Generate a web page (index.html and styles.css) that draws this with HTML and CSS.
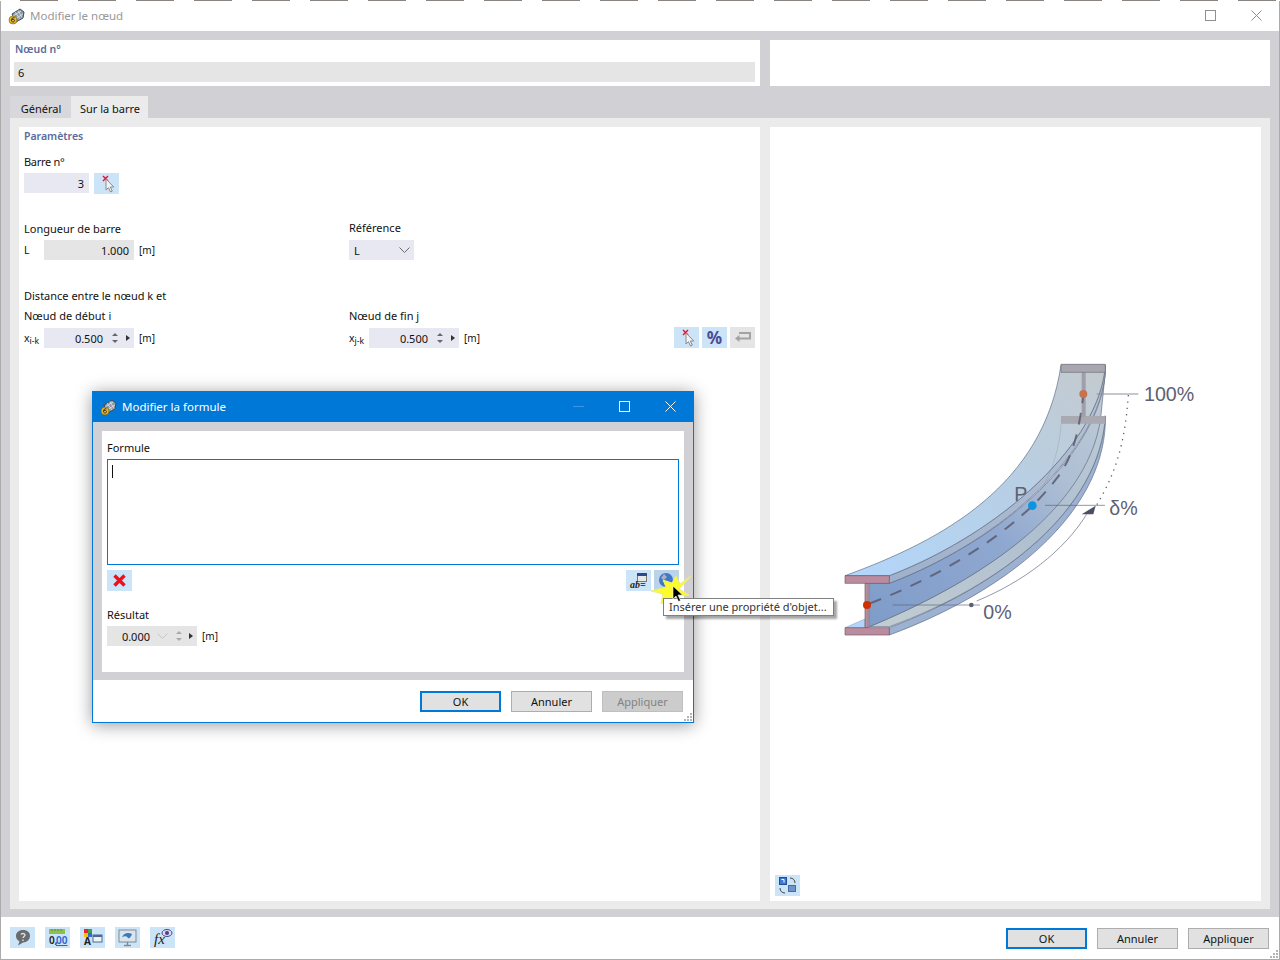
FILE: index.html
```html
<!DOCTYPE html>
<html lang="fr">
<head>
    <meta charset="UTF-8">
    <title>Modifier le nœud</title>
    <link rel="stylesheet" href="styles.css">
</head>
<body>
<svg class="defs" width="0" height="0">
    <symbol id="pick" viewBox="0 0 25 21">
        <path d="M9 3l5 5M14 3L9 8" stroke="#e8112d" stroke-width="1.400" fill="none"/>
        <path d="M12 6v11l2.500-2.300 2 4.300 1.800-.9-2-4.100h3.500z" fill="#f4f4f4" stroke="#8a8a8a"/>
    </symbol>
    <symbol id="logo" viewBox="0 0 18 18">
        <path d="M4 7l8-5 4 3-1 6-7 4z" fill="#8d9aa8" stroke="#3d4a5a"/>
        <path d="M7 5l5 7M10 3.500l4 7M5 9l8-5M7 12l8-5" stroke="#dfe5ea" fill="none" stroke-width=".8"/>
        <circle cx="5" cy="13" r="4" fill="#e5b82a" stroke="#6b5a10" stroke-width=".6"/>
        <path d="M6.500 10.800c-2-.6-3 1-3 2.400s.7 1.800 1.500 1.800 1.500-.6 1.500-1.400-.7-1.300-1.500-1.300-1.300.4-1.500.8" stroke="#333" fill="none"/>
    </symbol>
    <symbol id="grip" viewBox="0 0 10 10">
        <path d="M7 1h2v2H7zM4 4h2v2H4zM7 4h2v2H7zM1 7h2v2H1zM4 7h2v2H4zM7 7h2v2H7z" fill="#b4b4b4"/>
    </symbol>
</svg>

<div class="back-strip"></div>
<div class="window">
    <div class="titlebar">
        <svg class="title-logo" width="18" height="18"><use href="#logo"/></svg>
        <span class="title-text">Modifier le nœud</span>
        <svg class="win-ctl win-max" width="11" height="11"><rect x=".5" y=".5" width="10" height="10" fill="none" stroke="#8f8f8f"/></svg>
        <svg class="win-ctl win-close" width="11" height="11"><path d="M.5.500l10 10M10.500.500l-10 10" stroke="#8f8f8f"/></svg>
    </div>

    <div class="body">
        <div class="top-row">
            <div class="top-panel">
                <div class="group-title">Nœud n°</div>
                <div class="node-field">6</div>
            </div>
            <div class="top-panel top-panel-right"></div>
        </div>

        <div class="tabs">
            <div class="tab">Général</div>
            <div class="tab tab-active">Sur la barre</div>
        </div>

        <div class="tab-page">
            <div class="form-panel">
                <div class="group-title group-title-form">Paramètres</div>
                <div class="label label-bar">Barre n°</div>
                <div class="row row-bar">
                    <div class="field field-bar">3</div>
                    <button class="icon-btn"><svg width="25" height="21"><use href="#pick"/></svg></button>
                </div>

                <div class="row row-length">
                    <div class="col">
                        <div class="label">Longueur de barre</div>
                        <div class="row field-row">
                            <span class="sym">L</span>
                            <div class="field field-grey">1.000</div>
                            <span class="unit">[m]</span>
                        </div>
                    </div>
                    <div class="col">
                        <div class="label label-ref">Référence</div>
                        <div class="select">
                            <span>L</span>
                            <svg width="11" height="6"><path d="M.5.500l5 5 5-5" fill="none" stroke="#6a6a6a"/></svg>
                        </div>
                    </div>
                </div>

                <div class="label label-dist">Distance entre le nœud k et</div>
                <div class="row row-pos">
                    <div class="col">
                        <div class="label">Nœud de début i</div>
                    </div>
                    <div class="col">
                        <div class="label">Nœud de fin j</div>
                    </div>
                </div>
                <div class="row row-x">
                    <div class="col row field-row">
                        <span class="sym">x<sub>i-k</sub></span>
                        <div class="field field-spin">
                            <span class="spin-val">0.500</span>
                            <span class="spin"><i class="up"></i><i class="down"></i></span>
                            <i class="next"></i>
                        </div>
                        <span class="unit">[m]</span>
                    </div>
                    <div class="col row field-row">
                        <span class="sym">x<sub>j-k</sub></span>
                        <div class="field field-spin">
                            <span class="spin-val">0.500</span>
                            <span class="spin"><i class="up"></i><i class="down"></i></span>
                            <i class="next"></i>
                        </div>
                        <span class="unit">[m]</span>
                    </div>
                    <div class="tool-btns">
                        <button class="icon-btn"><svg width="25" height="21"><use href="#pick"/></svg></button>
                        <button class="icon-btn percent">%</button>
                        <button class="icon-btn icon-btn-off">
                            <svg width="25" height="21"><path d="M9 6h11v5.500H8" fill="none" stroke="#a3a3a3" stroke-width="2"/><path d="M9.500 8L5 11.500 9.500 15z" fill="#a3a3a3"/></svg>
                        </button>
                    </div>
                </div>
            </div>

            <div class="preview-panel">
                <svg class="beam" width="380" height="290" viewBox="0 0 1140 870">
                    <defs>
                        <linearGradient id="topFace" x1="0" y1="1" x2="1" y2="0">
                            <stop offset="0" stop-color="#b2d6fb"/>
                            <stop offset=".55" stop-color="#b8cfe4"/>
                            <stop offset="1" stop-color="#c4cace"/>
                        </linearGradient>
                        <linearGradient id="webFace" x1="0" y1="1" x2="1" y2="0">
                            <stop offset="0" stop-color="#7f9cc9"/>
                            <stop offset=".45" stop-color="#8fa8d0"/>
                            <stop offset=".7" stop-color="#aebfd4"/>
                            <stop offset="1" stop-color="#c0ccd4"/>
                        </linearGradient>
                        <linearGradient id="lowFace" x1="0" y1="1" x2="1" y2="0">
                            <stop offset="0" stop-color="#c2cdd2"/>
                            <stop offset=".6" stop-color="#aebfd0"/>
                            <stop offset="1" stop-color="#bccad6"/>
                        </linearGradient>
                        <linearGradient id="bandFace" x1="0" y1="1" x2="1" y2="0">
                            <stop offset="0" stop-color="#9fb0cc"/>
                            <stop offset="1" stop-color="#b4c2d6"/>
                        </linearGradient>
                    </defs>
                    <path d="M178 818V840C530 710 815 480 826 206V183C810 460 520 690 178 818Z" fill="#9db2d2" stroke="#5f6b80" stroke-width="2"/>
                    <path d="M118 815H178C520 690 810 460 826 183L800 190C770 480 420 690 118 815Z" fill="url(#lowFace)" stroke="#5f6b80" stroke-width="2"/>
                    <path d="M118 685H178C530 550 810 290 826 50L812 190C770 480 420 690 118 815Z" fill="url(#webFace)" stroke="#5f6b80" stroke-width="2"/>
                    <path d="M178 662C520 530 810 260 826 30V50C810 280 530 550 178 685Z" fill="url(#bandFace)" stroke="#5f6b80" stroke-width="2"/>
                    <path d="M45 662C340 555 640 390 693 30H826C810 260 520 530 178 662Z" fill="url(#topFace)" stroke="#5f6b80" stroke-width="2"/>
                    <path d="M693 206C690 270 670 340 640 392" fill="none" stroke="#8a94a0"/>
                    <path d="M693 183H826V206H693Z" fill="#a9a9b1"/>
                    <path d="M755 52H767V185H755Z" fill="#a09ea8"/>
                    <path d="M693 28H826V52H693Z" fill="#a8a6ae" stroke="#6b6b78" stroke-width="2"/>
                    <path d="M45 818L105 792V818Z" fill="#b2d6fb" stroke="#5f6b80"/>
                    <path d="M105 685H115V818H105Z" fill="#b98ca0" stroke="#6b5a68" stroke-width="2"/>
                    <path d="M45 662H178V685H45ZM45 818H178V840H45Z" fill="#bb8c9f" stroke="#6b5a68" stroke-width="2"/>
                    <path d="M120 745C330 665 560 530 680 370 720 320 745 250 760 120" fill="none" stroke="#5a5a6e" stroke-width="6" stroke-dasharray="36 30" stroke-opacity=".85"/>
                    <path d="M188 750H450" stroke="#5f6378" stroke-width="2" fill="none"/>
                    <circle cx="424" cy="750" r="7" fill="#5a5f78"/>
                    <path d="M645 451H825" stroke="#5f6378" stroke-width="2"/>
                    <path d="M800 117H925" stroke="#8d8d9a" stroke-width="3"/>
                    <path d="M440 738C580 680 700 590 770 478" fill="none" stroke="#5f6378" stroke-width="2"/>
                    <path d="M755 478L797 452 790 478Z" fill="#4b4f66"/>
                    <path d="M895 120C885 260 860 350 800 450" fill="none" stroke="#5f6378" stroke-width="4" stroke-dasharray="4 15"/>
                    <circle cx="111" cy="750" r="12" fill="#cf3000"/>
                    <circle cx="607" cy="452" r="13" fill="#0a94e2"/>
                    <circle cx="760" cy="117" r="12" fill="#c9704f"/>
                    <text class="beam-text" x="942" y="138">100%</text>
                    <text class="beam-text" x="553" y="438">P</text>
                    <text class="beam-text" x="838" y="481">δ%</text>
                    <text class="beam-text" x="460" y="792">0%</text>
                </svg>
                <button class="icon-btn view-btn">
                    <svg width="25" height="21">
                        <rect x="4.500" y="2.500" width="7" height="7" fill="#3f78d0" stroke="#1d4f9c"/>
                        <path d="M6.500 4.500h2.500v3" stroke="#fff" fill="none"/>
                        <rect x="13.500" y="10.500" width="7" height="6" fill="#6f94c7" stroke="#4a6a98"/>
                        <path d="M15 3c3 0 5 2 5 5M10 18c-3 0-5-2-5-5" stroke="#444" fill="none"/>
                    </svg>
                </button>
            </div>
        </div>
    </div>

    <div class="footer">
        <button class="icon-btn">
            <svg width="25" height="21">
                <path d="M13 3c4.500 0 7 2.500 7 6s-3 6.500-7 6.500l-5 3 1.500-4C7 13 6 11 6 9c0-3.500 3-6 7-6z" fill="#6b6b6b"/>
                <path d="M11 7.500c.5-1.500 4-1.500 4 .5 0 1.500-2 1.500-2 3M13 12.500v1.500" stroke="#cce4f7" stroke-width="1.400" fill="none"/>
            </svg>
        </button>
        <button class="icon-btn">
            <svg width="25" height="21">
                <rect x="4" y="2" width="16" height="5" fill="#8cc152"/>
                <path d="M7 2v2M10 2v2M13 2v2M16 2v2" stroke="#5b8f2c"/>
                <text class="icon-num" x="4" y="17">0,</text>
                <text class="icon-num icon-num-blue" x="11" y="17">00</text>
            </svg>
        </button>
        <button class="icon-btn">
            <svg width="25" height="21">
                <rect x="4" y="2" width="4" height="4" fill="#e8272a"/><rect x="8" y="2" width="4" height="4" fill="#43a047"/>
                <rect x="4" y="6" width="4" height="4" fill="#f4c20d"/><rect x="8" y="6" width="4" height="4" fill="#3367d6"/>
                <text class="icon-a" x="4" y="18">A</text>
                <rect x="13" y="8" width="9" height="7" fill="#f2f2f2" stroke="#4b6a90"/>
                <rect x="13" y="8" width="9" height="2" fill="#4b6a90"/>
            </svg>
        </button>
        <button class="icon-btn">
            <svg width="25" height="21">
                <rect x="4" y="3" width="17" height="12" fill="#d8e4ee" stroke="#808a94"/>
                <path d="M7 10c2-4 6-5 10-3-1 3-3 5-4 4-1-2-3-2-6-1z" fill="#3f78b8"/>
                <path d="M12.500 15v3M9 18.500h7" stroke="#808a94" stroke-width="1.400"/>
            </svg>
        </button>
        <button class="icon-btn">
            <svg width="25" height="21">
                <text class="icon-fx" x="4" y="17">fx</text>
                <ellipse cx="17" cy="6" rx="5" ry="3.500" fill="#d8d8ea" stroke="#4a4a8a"/>
                <circle cx="17" cy="6" r="2" fill="#4a3f8a"/>
            </svg>
        </button>
        <div class="footer-btns">
            <button class="btn btn-default">OK</button>
            <button class="btn">Annuler</button>
            <button class="btn">Appliquer</button>
        </div>
        <svg class="grip" width="10" height="10"><use href="#grip"/></svg>
    </div>

    <div class="dialog">
        <div class="dlg-title">
            <svg class="title-logo" width="18" height="18"><use href="#logo"/></svg>
            <span class="dlg-title-text">Modifier la formule</span>
            <svg class="dlg-ctl dlg-min" width="11" height="11"><path d="M0 5.500h11" stroke="#3f95e0"/></svg>
            <svg class="dlg-ctl dlg-max" width="11" height="11"><rect x=".5" y=".5" width="10" height="10" fill="none" stroke="#fff"/></svg>
            <svg class="dlg-ctl dlg-close" width="11" height="11"><path d="M.5.500l10 10M10.500.500l-10 10" stroke="#fff"/></svg>
        </div>
        <div class="dlg-body">
            <div class="dlg-panel">
                <div class="label">Formule</div>
                <div class="formula-box"><span class="caret"></span></div>
                <div class="row dlg-tools">
                    <button class="icon-btn">
                        <svg width="25" height="21"><path d="M7.500 5.500l10 10M17.500 5.500l-10 10" stroke="#f0101c" stroke-width="3.400"/></svg>
                    </button>
                    <div class="dlg-tools-right">
                        <button class="icon-btn">
                            <svg width="25" height="21">
                                <rect x="11.500" y="3.500" width="9" height="8" fill="#e8e8e8" stroke="#777"/>
                                <rect x="11" y="3" width="10" height="3" fill="#2c4a8a"/>
                                <text class="icon-ab" x="4" y="18">ab=</text>
                            </svg>
                        </button>
                        <button class="icon-btn icon-btn-dim">
                            <svg width="25" height="21">
                                <circle cx="12" cy="10" r="7" fill="#3f78c8"/>
                                <path d="M10 4l3 3-3 3-3-2z" fill="#a8b4c4"/>
                            </svg>
                        </button>
                    </div>
                </div>
                <div class="label label-result">Résultat</div>
                <div class="row field-row">
                    <div class="field field-result">
                        <span class="spin-val result-val">0.000</span>
                        <svg class="result-chev" width="11" height="6"><path d="M.5.500l5 5 5-5" fill="none" stroke="#c4c4c4"/></svg>
                        <span class="spin spin-off"><i class="up"></i><i class="down"></i></span>
                        <i class="next"></i>
                    </div>
                    <span class="unit">[m]</span>
                </div>
            </div>
        </div>
        <div class="dlg-footer">
            <button class="btn btn-default">OK</button>
            <button class="btn">Annuler</button>
            <button class="btn btn-off">Appliquer</button>
            <svg class="grip" width="10" height="10"><use href="#grip"/></svg>
        </div>
    </div>

    <svg class="burst" width="44" height="40" viewBox="0 0 44 40">
        <path d="M42 5L31 13 27 5 23 12 14 9 17 16 2 20 14 23 12 33 21 27 27 32 29 25 40 24 30 18z" fill="#fbfb2e" stroke="#eded7c"/>
    </svg>
    <div class="tooltip">Insérer une propriété d'objet...</div>
    <svg class="cursor" width="12" height="18" viewBox="0 0 12 18">
        <path d="M1 1v13l3-3 2.500 5.500 2-1L6 10h4.500z" fill="#000" stroke="#fff" stroke-width=".6"/>
    </svg>
</div>
</body>
</html>
```

FILE: styles.css
```css
body {
    margin: 0;
    width: 1280px;
    height: 960px;
    overflow: hidden;
    background-color: #ffffff;
    color: #111111;
    font-family: 'Noto Sans', sans-serif;
    font-size: 11px;
}
button {
    font-family: inherit;
    font-size: inherit;
    padding: 0;
}
.defs {
    display: block;
    height: 0;
}
.back-strip {
    height: 1px;
    background: repeating-linear-gradient(90deg, #fff 0, #fff 20px, #8a8580 20px, #8a8580 58px);
}
.window {
    position: relative;
    display: flex;
    flex-direction: column;
    height: 958px;
    border: solid #ababab;
    border-width: 0 1px 1px 1px;
}
.titlebar {
    display: flex;
    align-items: center;
    height: 30px;
    flex: none;
    padding-left: 7px;
    background-color: #fff;
}
.title-logo {
    flex: none;
}
.title-text {
    margin: 0 0 2px 4px;
    color: #999999;
    font-size: 11.5px;
}
.win-ctl {
    position: absolute;
    top: 9px;
}
.win-max { left: 1204px; }
.win-close { left: 1250px; }

.body {
    flex: 1;
    display: flex;
    flex-direction: column;
    padding: 9px 9px 8px 9px;
    background-color: #d0d0d5;
}
.top-row {
    display: grid;
    grid-template-columns: 750px 500px;
    column-gap: 10px;
}
.top-panel {
    height: 46px;
    background-color: #fff;
    padding: 2px 5px 0 4px;
    box-sizing: border-box;
}
.group-title {
    height: 14px;
    line-height: 14px;
    padding-left: 1px;
    color: #5c6b99;
    font-weight: 600;
    font-size: 10.5px;
}
.node-field {
    height: 20px;
    line-height: 22px;
    margin-top: 6px;
    padding-left: 4px;
    background-color: #e5e5e5;
}
.tabs {
    display: flex;
    margin-top: 10px;
    height: 22px;
}
.tab {
    width: 61px;
    padding-left: 1px;
    box-sizing: border-box;
    line-height: 25px;
    text-align: center;
    background-color: #d8d8dc;
}
.tab-active {
    width: 77px;
    background-color: #ebebeb;
}
.tab-page {
    flex: 1;
    display: grid;
    grid-template-columns: 741px 491px;
    column-gap: 10px;
    padding: 9px 9px 8px 9px;
    background-color: #ebebeb;
}
.form-panel {
    background-color: #fff;
    padding: 2px 5px 0 5px;
}
.group-title-form {
    padding-left: 0;
}
.label {
    height: 14px;
    line-height: 14px;
    white-space: nowrap;
}
.label-bar {
    margin-top: 12px;
    letter-spacing: -0.3px;
}
.row {
    display: flex;
    align-items: flex-start;
}
.row-bar {
    margin-top: 4px;
}
.row-length {
    margin-top: 28px;
}
.col {
    width: 325px;
    flex: none;
}
.field-row {
    align-items: center;
}
.col > .field-row {
    margin-top: 4px;
}
.label-ref {
    margin-top: -1px;
    margin-bottom: 5px;
}
.label-dist {
    margin-top: 29px;
}
.row-pos {
    margin-top: 6px;
}
.row-x {
    margin-top: 4px;
}
.row-x .col {
    margin-top: 1px;
}
.sym {
    width: 20px;
    flex: none;
    font-size: 10.5px;
    white-space: nowrap;
}
.sym sub {
    font-size: 8.5px;
    vertical-align: -2px;
    line-height: 0;
}
.unit {
    margin-left: 5px;
    font-size: 10px;
}
.field {
    display: flex;
    align-items: center;
    justify-content: flex-end;
    height: 20px;
    box-sizing: border-box;
    background-color: #e8e8f2;
    padding-right: 5px;
}
.field-bar {
    width: 65px;
}
.field-grey {
    width: 90px;
    background-color: #e5e5e5;
}
.field-spin {
    width: 90px;
    padding-right: 4px;
}
.spin-val {
    margin-right: 9px;
}
.spin {
    display: flex;
    flex-direction: column;
    gap: 4px;
    margin-right: 8px;
}
.spin .up {
    width: 0;
    border: 3px solid transparent;
    border-top: none;
    border-bottom: 3px solid #666;
}
.spin .down {
    width: 0;
    border: 3px solid transparent;
    border-bottom: none;
    border-top: 3px solid #666;
}
.spin-off .up { border-bottom-color: #aaa; }
.spin-off .down { border-top-color: #aaa; }
.next {
    width: 0;
    border: 3.5px solid transparent;
    border-right: none;
    border-left: 4px solid #333;
}
.select {
    display: flex;
    align-items: center;
    justify-content: space-between;
    width: 65px;
    height: 20px;
    box-sizing: border-box;
    padding: 0 4px 0 5px;
    background-color: #e8e8f2;
}
.icon-btn {
    display: block;
    width: 25px;
    height: 21px;
    border: none;
    background-color: #cce4f7;
    margin: 0;
}
.icon-btn svg {
    display: block;
}
.row-bar .icon-btn {
    margin-left: 5px;
}
.percent {
    color: #4a4a96;
    font-size: 17px;
    font-weight: 700;
    line-height: 21px;
}
.icon-btn-off {
    background-color: #e5e5e5;
}
.icon-btn-dim {
    background-color: #b9d3ea;
}
.tool-btns {
    display: flex;
    gap: 3px;
}
.preview-panel {
    position: relative;
    background-color: #fff;
    padding: 228px 0 0 60px;
}
.beam {
    display: block;
}
.beam-text {
    fill: #5e6173;
    font-family: 'Liberation Sans', sans-serif;
    font-size: 59px;
}
.view-btn {
    position: absolute;
    left: 5px;
    bottom: 5px;
}
.icon-num {
    font-family: 'Noto Sans', sans-serif;
    font-size: 10px;
    font-weight: 600;
    fill: #222;
}
.icon-num-blue {
    fill: #2a62c8;
    text-decoration: underline;
}
.icon-a {
    font-family: 'Noto Sans', sans-serif;
    font-size: 10px;
    font-weight: 700;
    fill: #222;
}
.icon-fx {
    font-family: 'Liberation Serif', serif;
    font-size: 15px;
    font-style: italic;
    fill: #222;
}
.icon-ab {
    font-family: 'Liberation Serif', serif;
    font-size: 10px;
    font-style: italic;
    font-weight: 700;
    fill: #222;
}
.footer {
    position: relative;
    display: flex;
    align-items: flex-start;
    gap: 10px;
    flex: none;
    height: 42px;
    box-sizing: border-box;
    padding: 10px 10px 0 9px;
    background-color: #fff;
}
.footer-btns {
    display: flex;
    gap: 10px;
    margin-left: auto;
    margin-top: 1px;
}
.btn {
    width: 81px;
    height: 21px;
    box-sizing: border-box;
    border: 1px solid #adadad;
    background-color: #e1e1e1;
    color: #111;
}
.btn-default {
    border: 2px solid #0078d7;
}
.btn-off {
    background-color: #cccccc;
    border-color: #bfbfbf;
    color: #838383;
}
.grip {
    position: absolute;
    right: 0;
    bottom: 0;
}

.dialog {
    position: absolute;
    left: 91px;
    top: 390px;
    width: 600px;
    height: 330px;
    border: 1px solid #0078d7;
    background-color: #fff;
    display: flex;
    flex-direction: column;
    box-shadow: 0 2px 16px rgba(0, 0, 0, 0.4);
}
.dlg-title {
    display: flex;
    align-items: center;
    flex: none;
    height: 30px;
    padding-left: 7px;
    background-color: #0078d7;
}
.dlg-title-text {
    margin: 0 0 2px 4px;
    color: #fff;
    font-size: 11.5px;
}
.dlg-ctl {
    position: absolute;
    top: 9px;
}
.dlg-min { left: 480px; }
.dlg-max { left: 526px; }
.dlg-close { left: 572px; }
.dlg-body {
    flex: none;
    height: 258px;
    box-sizing: border-box;
    padding: 9px 9px 8px 9px;
    background-color: #d0d0d5;
}
.dlg-panel {
    height: 241px;
    box-sizing: border-box;
    padding: 10px 5px 0 5px;
    background-color: #fff;
}
.formula-box {
    height: 106px;
    box-sizing: border-box;
    margin-top: 4px;
    padding: 5px 0 0 4px;
    border: 1px solid #0078d7;
}
.caret {
    display: block;
    width: 1px;
    height: 13px;
    background-color: #111;
}
.dlg-tools {
    margin-top: 5px;
    justify-content: space-between;
}
.dlg-tools-right {
    display: flex;
    gap: 3px;
}
.label-result {
    margin-top: 17px;
}
.label-result + .field-row {
    margin-top: 4px;
}
.field-result {
    width: 90px;
    padding-right: 4px;
    background-color: #e5e5e5;
}
.result-val {
    margin-right: 7px;
}
.result-chev {
    margin-right: 8px;
}
.field-result .spin {
    margin-right: 7px;
}
.dlg-footer {
    position: relative;
    flex: 1;
    display: flex;
    justify-content: flex-end;
    gap: 10px;
    padding: 11px 10px 0 0;
}
.burst {
    position: absolute;
    left: 648px;
    top: 570px;
}
.tooltip {
    position: absolute;
    left: 662px;
    top: 597px;
    width: 171px;
    height: 18px;
    box-sizing: border-box;
    border: 1px solid #808080;
    background-color: #fff;
    padding-left: 5px;
    line-height: 16px;
    font-size: 11px;
    color: #333;
    white-space: nowrap;
    box-shadow: 3px 3px 2px rgba(0, 0, 0, 0.35);
}
.cursor {
    position: absolute;
    left: 671px;
    top: 584px;
}
```
